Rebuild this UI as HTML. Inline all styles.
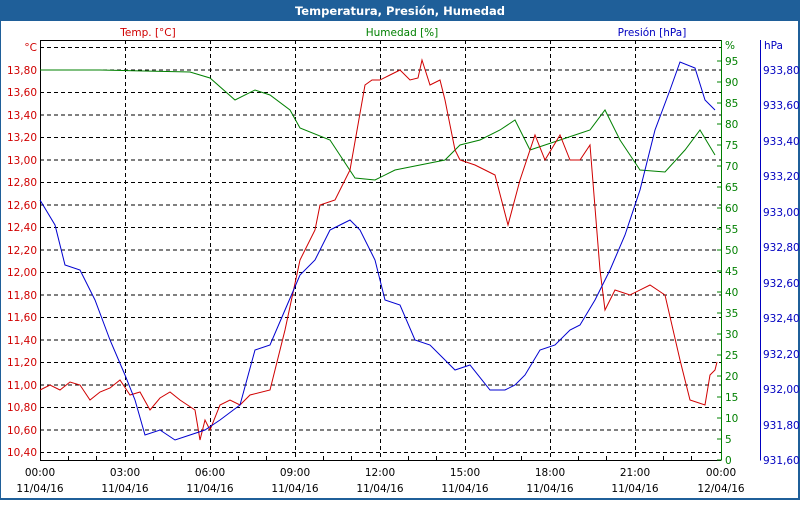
<!DOCTYPE html>
<html><head><meta charset="utf-8"><style>
body{margin:0;width:800px;height:500px;overflow:hidden;background:#fff}
</style></head><body>
<svg width="800" height="500" xmlns="http://www.w3.org/2000/svg" font-family="DejaVu Sans, sans-serif" font-size="10.5">
<rect x="0" y="0" width="800" height="500" fill="#1f5f99"/>
<rect x="1" y="21" width="797" height="477" fill="#fff"/>
<text x="400" y="15" fill="#fff" font-weight="bold" text-anchor="middle" font-size="11.5">Temperatura, Presión, Humedad</text>
<text x="148" y="36" fill="#d00000" text-anchor="middle">Temp. [°C]</text>
<text x="402" y="36" fill="#008000" text-anchor="middle">Humedad [%]</text>
<text x="652" y="36" fill="#0000c0" text-anchor="middle">Presión [hPa]</text>
<g stroke="#000" stroke-dasharray="4,3" stroke-width="1">
<path d="M40 47.5H721M40 70H721M40 92.5H721M40 115H721M40 137.5H721M40 160H721M40 182.5H721M40 205H721M40 227.5H721M40 250H721M40 272.5H721M40 295H721M40 317.5H721M40 340H721M40 362.5H721M40 385H721M40 407.5H721M40 430H721M40 452.5H721"/>
<path d="M125.5 40V460M210.5 40V460M295.5 40V460M380.5 40V460M465.5 40V460M550.5 40V460M635.5 40V460"/>
</g>
<path d="M40.5 40V460.5H721" stroke="#000" fill="none"/>
<path d="M40 40.5H721" stroke="#000"/>
<g stroke="#000"><path d="M68.5 460v-4M96.5 460v-4M153.5 460v-4M181.5 460v-4M238.5 460v-4M266.5 460v-4M323.5 460v-4M351.5 460v-4M408.5 460v-4M436.5 460v-4M493.5 460v-4M521.5 460v-4M578.5 460v-4M606.5 460v-4M663.5 460v-4M691.5 460v-4"/></g>
<path d="M721.5 40V460.5" stroke="#008000"/>
<path d="M760.5 40V460.5" stroke="#0000c0"/>
<g fill="#d00000" text-anchor="end">
<text x="37" y="51">°C</text>
<text x="37" y="74">13,80</text><text x="37" y="96">13,60</text><text x="37" y="119">13,40</text><text x="37" y="141">13,20</text><text x="37" y="164">13,00</text><text x="37" y="186">12,80</text><text x="37" y="209">12,60</text><text x="37" y="231">12,40</text><text x="37" y="254">12,20</text><text x="37" y="276">12,00</text><text x="37" y="299">11,80</text><text x="37" y="321">11,60</text><text x="37" y="344">11,40</text><text x="37" y="366">11,20</text><text x="37" y="389">11,00</text><text x="37" y="411">10,80</text><text x="37" y="434">10,60</text><text x="37" y="456">10,40</text>
</g>
<g fill="#008000">
<text x="725" y="49">%</text>
<text x="725" y="464">0</text><text x="725" y="443">5</text><text x="725" y="422">10</text><text x="725" y="401">15</text><text x="725" y="380">20</text><text x="725" y="359">25</text><text x="725" y="338">30</text><text x="725" y="317">35</text><text x="725" y="296">40</text><text x="725" y="275">45</text><text x="725" y="254">50</text><text x="725" y="233">55</text><text x="725" y="212">60</text><text x="725" y="191">65</text><text x="725" y="170">70</text><text x="725" y="149">75</text><text x="725" y="128">80</text><text x="725" y="107">85</text><text x="725" y="86">90</text><text x="725" y="65">95</text>
</g>
<g stroke="#008000"><path d="M721 460h-4M721 439h-4M721 418h-4M721 397h-4M721 376h-4M721 355h-4M721 334h-4M721 313h-4M721 292h-4M721 271h-4M721 250h-4M721 229h-4M721 208h-4M721 187h-4M721 166h-4M721 145h-4M721 124h-4M721 103h-4M721 82h-4M721 61h-4"/></g>
<g fill="#0000c0">
<text x="764" y="49">hPa</text>
<text x="763" y="464">931,60</text><text x="763" y="429">931,80</text><text x="763" y="393">932,00</text><text x="763" y="358">932,20</text><text x="763" y="322">932,40</text><text x="763" y="287">932,60</text><text x="763" y="251">932,80</text><text x="763" y="216">933,00</text><text x="763" y="180">933,20</text><text x="763" y="145">933,40</text><text x="763" y="109">933,60</text><text x="763" y="74">933,80</text>
</g>
<g fill="#000" text-anchor="middle">
<text x="40" y="476">00:00</text><text x="40" y="492">11/04/16</text>
<text x="125" y="476">03:00</text><text x="125" y="492">11/04/16</text>
<text x="210" y="476">06:00</text><text x="210" y="492">11/04/16</text>
<text x="295" y="476">09:00</text><text x="295" y="492">11/04/16</text>
<text x="380" y="476">12:00</text><text x="380" y="492">11/04/16</text>
<text x="465" y="476">15:00</text><text x="465" y="492">11/04/16</text>
<text x="550" y="476">18:00</text><text x="550" y="492">11/04/16</text>
<text x="635" y="476">21:00</text><text x="635" y="492">11/04/16</text>
<text x="721" y="476">00:00</text><text x="721" y="492">12/04/16</text>
</g>
<polyline fill="none" stroke="#008000" points="40,70 100,70 190,72 210,78 235,100 255,90 270,95 290,110 300,128 330,140 355,178 375,180 395,170 420,165 445,160 460,145 480,140 500,130 515,120 530,150 545,145 560,140 575,135 590,130 605,110 620,140 640,170 665,172 685,150 700,130 715,155"/>
<polyline fill="none" stroke="#d00000" points="40,390 50,385 60,390 70,382 80,385 90,400 100,392 110,388 120,380 130,395 140,392 150,410 160,398 170,392 180,400 195,410 200,440 205,420 210,430 220,405 230,400 240,405 250,395 270,390 285,330 300,260 315,230 320,205 335,200 350,170 365,85 372,80 380,80 390,75 400,70 410,80 418,78 422,60 430,85 440,80 445,100 455,150 460,160 475,165 485,170 495,175 508,225 520,180 535,135 545,160 560,135 570,160 580,160 590,145 600,270 605,310 615,290 630,295 650,285 665,295 680,360 690,400 705,405 710,375 715,370 717,362"/>
<polyline fill="none" stroke="#0000d0" points="40,200 55,225 65,265 80,270 95,300 110,340 125,375 135,400 145,435 160,430 175,440 190,435 205,430 220,420 240,405 255,350 270,345 285,310 300,275 315,260 330,230 340,225 350,220 360,230 375,260 385,300 400,305 415,340 430,345 445,360 455,370 470,365 490,390 505,390 515,385 525,375 540,350 555,345 570,330 580,325 595,300 610,270 625,235 640,190 655,130 670,90 680,62 695,68 705,100 715,110"/>
</svg>
</body></html>
